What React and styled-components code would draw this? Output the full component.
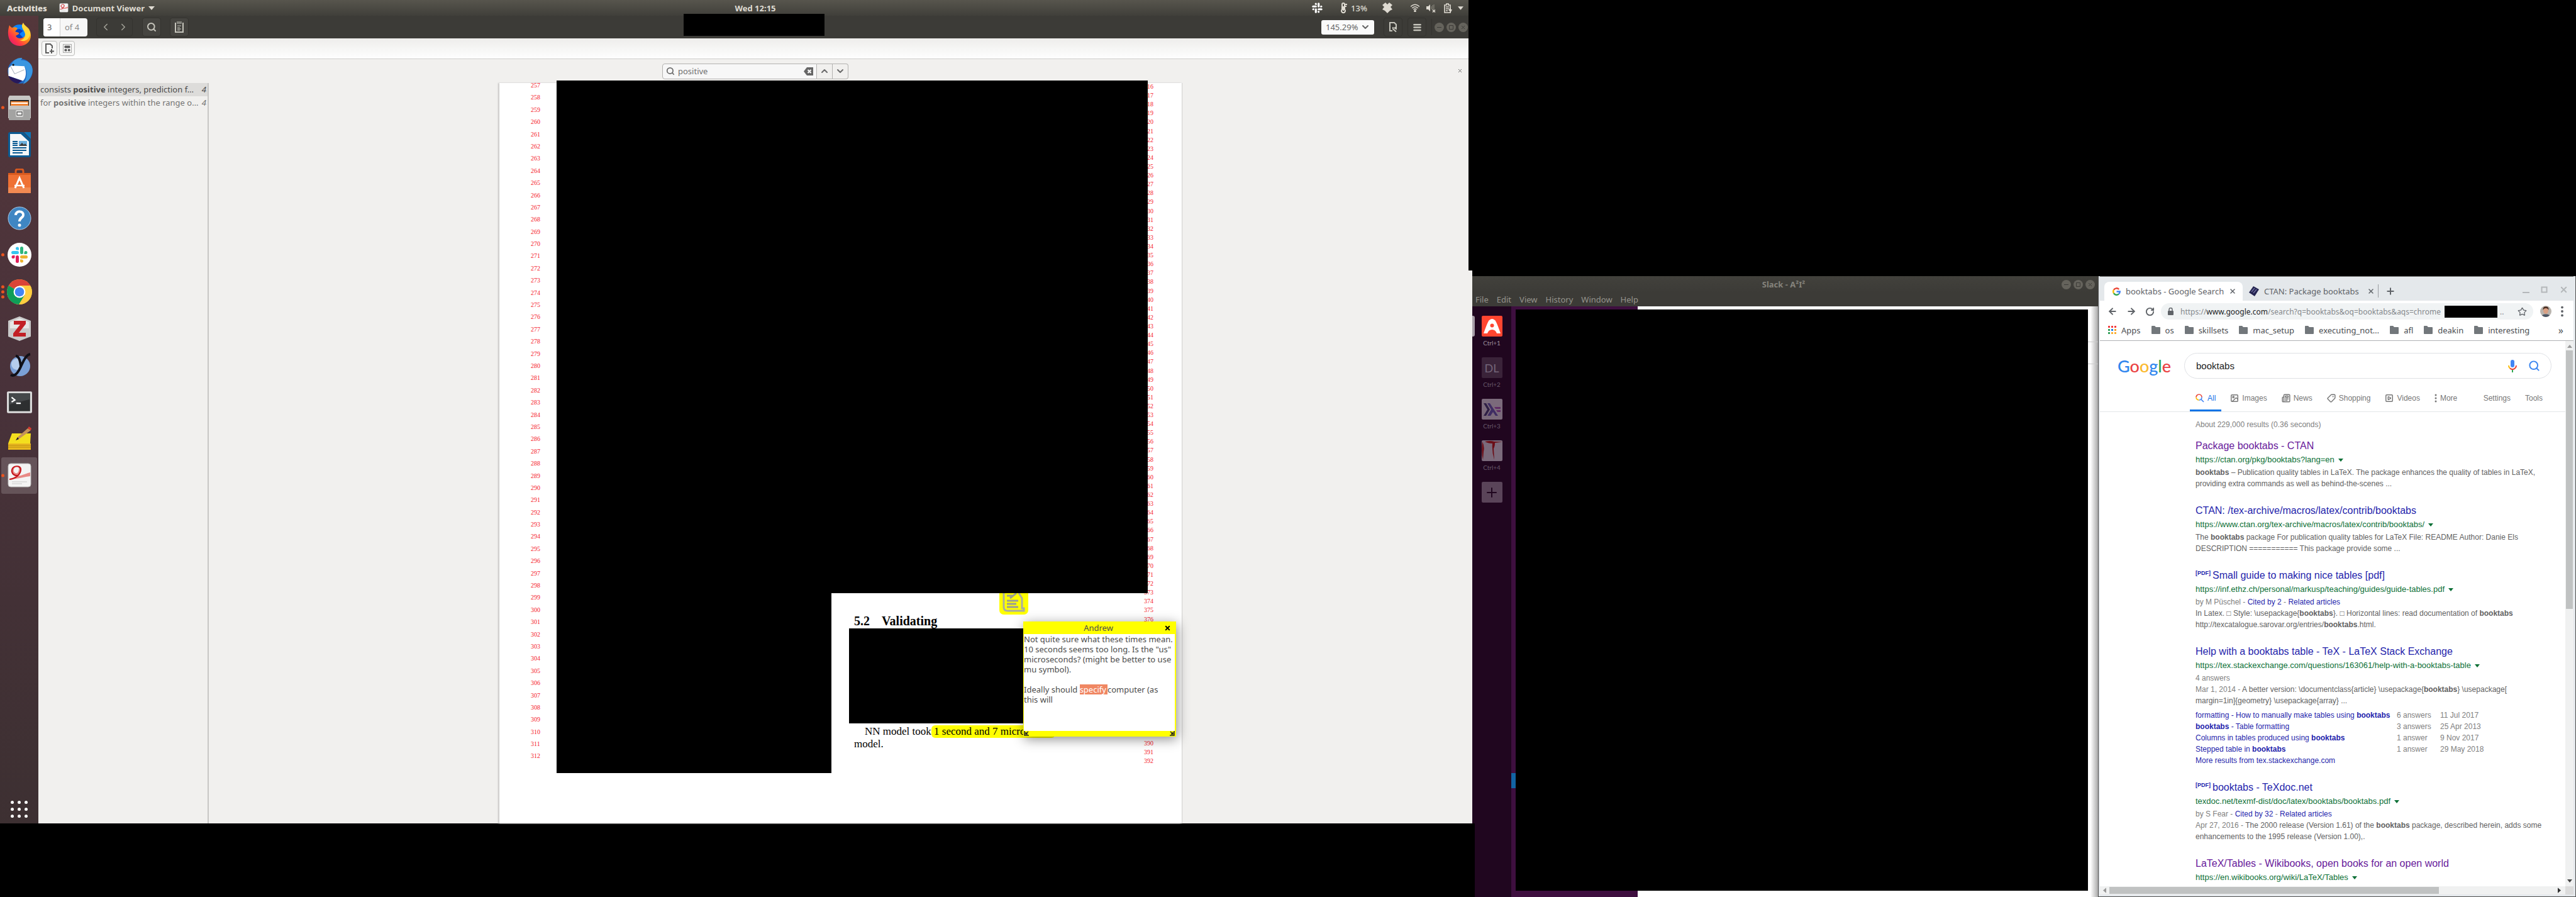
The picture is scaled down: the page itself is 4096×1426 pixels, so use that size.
import React from 'react';
import styled, { createGlobalStyle, css } from 'styled-components';
import {
  Search, ChevronLeft, ChevronRight, ChevronUp, ChevronDown, ArrowLeft, ArrowRight,
  RotateCw, Plus, Star, Tag, X, Newspaper, Image as ImageIcon, SquarePlay, Menu,
} from 'lucide-react';

const ui = '"Noto Sans", "Open Sans", sans-serif';
const arial = '"Liberation Sans", Arial, sans-serif';
const serif = '"Liberation Serif", "Times New Roman", serif';

const Global = createGlobalStyle`
  * { box-sizing: border-box; }
  body { margin: 0; background: #000; font-family: ${ui}; font-size: 13px; }
  button, input, select { font: inherit; color: inherit; margin: 0; padding: 0; border: 0; background: none; }
  a { color: inherit; text-decoration: none; }
  ul, h1, h2, h3, p { margin: 0; padding: 0; list-style: none; font-weight: 400; }
  svg { display: block; flex: none; }
`;

/* ---------- desktop ---------- */
const Desktop = styled.div`
  position: relative;
  display: grid;
  grid-template-columns: minmax(0, 2341fr) minmax(0, 995fr) minmax(0, 760fr);
  grid-template-rows: minmax(0, 439fr) minmax(0, 870fr) minmax(0, 117fr);
  height: 100vh;
  background: #000;
  overflow: hidden;
`;
const Monitor = styled.div`
  grid-column: 1;
  grid-row: 1 / 3;
  position: relative;
  display: flex;
  flex-direction: column;
  min-height: 0;
`;
const ScreenEdge = styled.div`
  position: absolute;
  top: 0;
  right: 0;
  width: 6px;
  height: 430px;
  background: #000;
`;

/* ---------- shell bar ---------- */
const ShellBar = styled.header`
  display: grid;
  grid-template-columns: 1201fr auto 1140fr;
  align-items: center;
  height: 25px;
  flex: none;
  background: linear-gradient(#57554d, #403f3a);
  color: #dfdbd2;
  font-weight: 700;
  line-height: 24px;
`;
const ShellLeft = styled.div`
  display: flex;
  align-items: center;
  padding-left: 11px;
`;
const AppMenu = styled.button`
  display: flex;
  align-items: center;
  gap: 6px;
  margin-left: 19px;
  font-weight: 700;
`;
const Clock = styled.time`
  margin: 0 -32px;
`;
const ShellRight = styled.div`
  display: flex;
  align-items: center;
  justify-content: flex-end;
  padding-right: 14px;
`;
const Tray = styled.span`
  display: flex;
  align-items: center;
  gap: 6px;
  margin-right: ${p => p.$after}px;
  font-weight: 500;
`;

/* ---------- dock ---------- */
const Workspace = styled.div`
  display: flex;
  flex: 1;
  min-height: 0;
`;
const Dock = styled.nav`
  display: flex;
  flex-direction: column;
  justify-content: space-between;
  align-items: center;
  width: 61px;
  flex: none;
  padding-bottom: 9px;
  background: linear-gradient(#54373b, #49323a 45%, #3d3032);
`;
const DockList = styled.ul`
  display: flex;
  flex-direction: column;
  width: 100%;
  height: 760px;
`;
const DockItem = styled.li`
  position: relative;
  display: flex;
  align-items: center;
  justify-content: center;
  flex: 1;
  margin: 0 2px;
  border-radius: 3px;
  background: ${p => (p.$active ? 'rgba(255,255,255,.17)' : 'none')};
`;
const Dots = styled.span`
  position: absolute;
  left: 0;
  top: 50%;
  transform: translateY(-50%);
  display: grid;
  gap: 3px;
  i { width: 5px; height: 5px; border-radius: 50%; background: #e95420; }
`;
const GridButton = styled.button`
  display: grid;
  grid-template-columns: repeat(3, 5px);
  gap: 6px;
  i { width: 5px; height: 5px; border-radius: 50%; background: #fff; }
`;

/* ---------- document viewer ---------- */
const Viewer = styled.main`
  display: flex;
  flex-direction: column;
  flex: 1;
  min-width: 0;
  background: #f1f0ee;
  color: #4c4c4c;
`;
const ViewerHeader = styled.div`
  position: relative;
  display: flex;
  align-items: center;
  height: 36px;
  flex: none;
  padding: 0 7px 0 8px;
  background: #3c3b37;
`;
const PageEntry = styled.label`
  display: flex;
  width: 70px;
  height: 29px;
  margin-right: 14px;
  border-radius: 4px;
  background: #f7f7f7;
  line-height: 29px;
  color: #8b8b8b;
  overflow: hidden;
  input { width: 27px; padding-left: 6px; border-right: 1px solid #d0d0d0; color: #5c5c5c; background: #fff; }
  span { padding-left: 7px; }
`;
const HeaderButton = styled.button`
  display: flex;
  align-items: center;
  justify-content: space-around;
  width: 30px;
  height: 30px;
  margin-right: ${p => p.$after ?? 14}px;
  border: 1px solid #34332f;
  border-radius: 4px;
  background: ${p => (p.$raised ? '#454440' : '#3d3c38')};
  color: #c5c4bb;
`;
const Pair = styled.div`
  display: flex;
  width: 58px;
  height: 30px;
  margin-right: 15px;
  border: 1px solid #34332f;
  border-radius: 4px;
  color: #a3a299;
  button { flex: 1; display: flex; align-items: center; justify-content: center; }
`;
const TitleRedaction = styled.div`
  position: absolute;
  left: 1026px;
  top: -3px;
  width: 224px;
  height: 35px;
  background: #000;
`;
const ZoomBox = styled.label`
  display: flex;
  align-items: center;
  width: 84px;
  height: 23px;
  margin: 0 15px 0 auto;
  padding: 0 6px 0 7px;
  border-radius: 3px;
  background: #fafafa;
  color: #666;
  select { flex: 1; min-width: 0; appearance: none; outline: 0; }
`;
const WindowDots = styled.div`
  display: flex;
  gap: 4px;
  color: #3c3b37;
  button {
    display: flex; align-items: center; justify-content: center;
    width: 15px; height: 15px; border-radius: 50%; background: #65635c;
  }
`;
const Rule = styled.span`
  width: 1px;
  height: 26px;
  margin: 0 4px 0 0;
  background: #33322e;
`;
const AnnotBar = styled.div`
  display: flex;
  align-items: center;
  gap: 3px;
  height: 33px;
  flex: none;
  padding: 0 5px 1px;
  background: linear-gradient(#eeedeb, #fefefe);
  border-bottom: 1px solid #cfcecc;
`;
const LightButton = styled.button`
  display: flex;
  align-items: center;
  justify-content: center;
  width: 25px;
  height: 24px;
  border: 1px solid #bdbdbb;
  border-radius: 4px;
  background: #f7f7f6;
  color: #5c5c5c;
`;
const FindBar = styled.form`
  display: flex;
  align-items: center;
  justify-content: center;
  position: relative;
  height: 38px;
  flex: none;
  color: #6b6b6b;
`;
const FindEntry = styled.label`
  display: flex;
  align-items: center;
  width: 246px;
  height: 25px;
  padding: 0 5px;
  gap: 5px;
  border: 1px solid #b3b2b0;
  border-radius: 4px 0 0 4px;
  background: #f7f7f7;
  input { flex: 1; min-width: 0; color: #6f6f6f; outline: 0; }
`;
const FindStep = styled.button`
  display: flex;
  align-items: center;
  justify-content: center;
  width: 25px;
  height: 25px;
  border: 1px solid #b3b2b0;
  border-left: 0;
  border-radius: ${p => (p.$last ? '0 4px 4px 0' : '0')};
`;
const FindClose = styled.button`
  position: absolute;
  right: 15px;
  top: 14px;
`;
const ViewerBody = styled.div`
  display: flex;
  flex: 1;
  min-height: 0;
`;
const Results = styled.aside`
  width: 271px;
  flex: none;
  border-right: 2px solid #c8c7c5;
`;
const ResultLine = styled.button`
  display: flex;
  justify-content: space-between;
  width: 100%;
  height: 21px;
  padding: 0 2px 0 3px;
  line-height: 21px;
  text-align: left;
  white-space: nowrap;
  color: ${p => (p.$on ? '#4c4c4c' : '#747473')};
  background: ${p => (p.$on ? '#dddcda' : 'none')};
`;
const DocArea = styled.div`
  flex: 1;
  min-width: 0;
  display: flex;
  justify-content: center;
`;
const Page = styled.article`
  position: relative;
  display: flex;
  width: 1085px;
  flex: none;
  background: #fff;
  box-shadow: -2px 0 2px #c9c8c6, 1px 0 1px #d5d4d2;
  font-family: ${serif};
  color: #000;
`;
const Numbers = styled.div`
  display: flex;
  flex-direction: column;
  justify-content: space-between;
  flex: none;
  width: ${p => p.$w}px;
  height: ${p => p.$h}px;
  margin-left: ${p => p.$ml}px;
  margin-top: ${p => p.$mt}px;
  font-size: 10px;
  line-height: 8px;
  color: #f5222c;
  span { height: 8px; }
`;
const Column = styled.div`
  position: relative;
  z-index: 1;
  width: 940px;
  flex: none;
`;
const Blackout = styled.div`
  width: ${p => (p.$w ? p.$w + 'px' : '100%')};
  height: ${p => p.$h}px;
  margin-top: ${p => p.$mt || 0}px;
  flex: none;
  background: #000;
`;
const Lower = styled.div`
  display: flex;
`;
const Section = styled.section`
  padding: 33px 0 0 28px;
`;
const SectionTitle = styled.h2`
  display: flex;
  gap: 19px;
  padding-left: 8px;
  font-size: 20px;
  font-weight: 700;
  line-height: 23px;
`;
const Para = styled.p`
  margin-top: 3px;
  padding-left: 8px;
  font-size: 17px;
  line-height: 20px;
  text-indent: 17px;
  white-space: nowrap;
  mark { display: inline-block; width: 197px; padding-left: 4px; margin-left: -4px; border-radius: 6px; background: #ff0; text-indent: 0; }
`;
const NoteMark = styled.button`
  position: absolute;
  left: 704px;
  top: 811px;
  width: 46px;
  height: 34px;
  display: flex;
  justify-content: center;
  border-radius: 0 0 7px 7px;
  background: #ff0;
  overflow: hidden;
`;
const Popup = styled.div`
  position: absolute;
  z-index: 2;
  left: 833px;
  top: 856px;
  width: 243px;
  height: 183px;
  display: flex;
  flex-direction: column;
  padding: 0 2px 0 1px;
  background: #ff0;
  box-shadow: 2px 4px 18px rgba(0,0,0,.45);
  font-family: ${ui};
  color: #4c4c4c;
`;
const PopupHead = styled.div`
  display: flex;
  align-items: center;
  height: 20px;
  flex: none;
  padding: 0 6px 0 14px;
  span { flex: 1; text-align: center; line-height: 20px; }
  button { color: #000; }
`;
const PopupText = styled.div`
  flex: 1;
  background: #fff;
  line-height: 16px;
  white-space: pre;
  mark { display: inline-block; padding-right: 2px; color: #fff; background: #f08763; }
`;
const PopupFoot = styled.div`
  display: flex;
  justify-content: space-between;
  height: 9px;
  flex: none;
`;

/* ---------- slack ---------- */
const Slack = styled.section`
  grid-column: 2;
  grid-row: 2 / 4;
  display: flex;
  flex-direction: column;
  min-height: 0;
  background: #3c3b37;
  color: #96948d;
`;
const SlackTitle = styled.div`
  display: grid;
  grid-template-columns: 80px 1fr 80px;
  align-items: center;
  height: 26px;
  flex: none;
  padding-right: 5px;
  background: linear-gradient(#42413c, #3c3b37);
  h2 { text-align: center; font-size: 13px; font-weight: 700; color: #85837c; }
  > div { justify-self: end; }
`;
const MenuBar = styled.nav`
  display: flex;
  gap: 13px;
  height: 22px;
  flex: none;
  padding-left: 5px;
  line-height: 22px;
`;
const SlackBody = styled.div`
  display: flex;
  flex: 1;
  min-height: 0;
`;
const Teams = styled.ul`
  position: relative;
  width: 62px;
  flex: none;
  padding-top: 15px;
  background: #20061f;
`;
const Team = styled.li`
  position: relative;
  display: flex;
  flex-direction: column;
  align-items: center;
  gap: 4px;
  height: 66px;
  font: 10px/12px Lato, ${ui};
  color: ${p => (p.$on ? '#9a8c9a' : '#67586a')};
  ${p => p.$on && css`
    &::before { content: ''; position: absolute; left: 0; top: 0; width: 4px; height: 33px; border-radius: 0 3px 3px 0; background: #a79ea7; }
  `}
`;
const TeamTile = styled.button`
  display: flex;
  align-items: center;
  justify-content: center;
  width: 33px;
  height: 33px;
  border-radius: 2px;
  background: ${p => p.$bg};
  font-size: 18px;
  color: #74657a;
  overflow: hidden;
`;
const SlackPane = styled.div`
  flex: 1;
  display: flex;
  padding: 5px 16px 10px 7px;
  position: relative;
  background: linear-gradient(90deg, #3e0f3f 201px, #fff 201px, #fff calc(100% - 12px), #aaa);
`;
const ChannelMark = styled.span`
  position: absolute;
  left: 0;
  top: 742px;
  width: 7px;
  height: 24px;
  background: #1264a3;
`;
const PaneLine = styled.span`
  position: absolute;
  right: 0;
  top: ${p => p.$top}px;
  width: 16px;
  height: 1px;
  background: #ccc;
`;
const CornerBlack = styled.li`
  position: absolute;
  left: 0;
  bottom: 0;
  width: 4px;
  height: 117px;
  background: #000;
`;
const Fill = styled.div`
  flex: 1;
  background: #000;
`;

/* ---------- chrome ---------- */
const Chrome = styled.section`
  grid-column: 3;
  grid-row: 2 / 4;
  display: flex;
  flex-direction: column;
  min-height: 0;
  padding: 0 3px 3px 2px;
  border: 1px solid #4f4f4f;
  border-top: 0;
  background: #e4e8eb;
  color: #5f6368;
`;
const TabStrip = styled.div`
  display: flex;
  height: 39px;
  flex: none;
  padding: 8px 7px 0;
  border-top: 1px solid #777;
`;
const Tab = styled.div`
  display: flex;
  align-items: center;
  gap: 8px;
  width: ${p => (p.$on ? 220 : 215)}px;
  padding: 0 ${p => (p.$on ? 10 : 5)}px 0 ${p => (p.$on ? 13 : 10)}px;
  border-radius: 8px 8px 0 0;
  background: ${p => (p.$on ? '#fff' : 'none')};
  white-space: nowrap;
  span { flex: 1; }
`;
const NewTab = styled.button`
  display: flex;
  align-items: center;
  height: 21px;
  margin-top: 4px;
  padding-left: 11px;
  border-left: 1px solid #9a9da1;
`;
const WinButtons = styled.div`
  display: flex;
  gap: 18px;
  margin: 0 1px 0 auto;
  height: 24px;
  align-items: center;
  color: #b4b7ba;
`;
const Toolbar = styled.div`
  display: flex;
  align-items: center;
  height: 34px;
  flex: none;
  padding: 0 15px 0 12px;
  background: #fff;
`;
const NavButton = styled.button`
  margin-right: 14px;
`;
const Omnibox = styled.div`
  display: flex;
  align-items: center;
  flex: 1;
  height: 26px;
  margin: 0 11px 0 -4px;
  padding: 0 10px 0 11px;
  border-radius: 13px;
  background: #f0f3f4;
  font-size: 12px;
  color: #85888c;
  svg:first-child { margin-right: 11px; }
  b { font-weight: 400; color: #202124; }
`;
const Address = styled.div`
  flex: 1;
  display: flex;
  align-items: center;
  white-space: nowrap;
  i { width: 84px; height: 19px; margin: 0 4px 0 6px; background: #000; }
`;
const Bookmarks = styled.nav`
  display: flex;
  align-items: center;
  gap: 17px;
  height: 30px;
  flex: none;
  padding: 0 16px 4px 13px;
  background: #fff;
  border-bottom: 1px solid #b0b2b4;
  color: #4b4e52;
  > button { margin-left: auto; font-size: 16px; }
`;
const Bookmark = styled.a`
  display: flex;
  align-items: center;
  gap: 8px;
  white-space: nowrap;
`;
const Viewport = styled.div`
  display: flex;
  flex: 1;
  min-height: 0;
  background: #fff;
`;
const Web = styled.div`
  flex: 1;
  min-width: 0;
  overflow: hidden;
  padding-top: 19px;
  font: 12px/18px ${arial};
`;
const SearchRow = styled.form`
  display: flex;
  align-items: center;
  padding: 0 22px 0 28px;
`;
const Logo = styled.a`
  width: 106px;
  font: 27px/36px Lato, ${ui};
  font-weight: 500;
  span:nth-child(1), span:nth-child(4) { color: #2f86ee; }
  span:nth-child(2), span:nth-child(6) { color: #ea4142; }
  span:nth-child(3) { color: #fbb92d; }
  span:nth-child(5) { color: #34a853; }
`;
const SearchBox = styled.label`
  display: flex;
  align-items: center;
  gap: 18px;
  flex: 1;
  height: 41px;
  padding: 0 17px 0 18px;
  border: 1px solid #dfe1e5;
  border-radius: 21px;
  font-size: 15px;
  color: #222;
  input { flex: 1; outline: 0; }
`;
const SearchNav = styled.nav`
  display: flex;
  gap: 5px;
  padding: 21px 27px 0 143px;
  border-bottom: 1px solid #e4e6e8;
`;
const SearchTab = styled.a`
  display: flex;
  align-items: center;
  gap: 5px;
  height: 31px;
  padding: 0 9px 8px;
  color: ${p => (p.$on ? '#1a73e8' : '#777')};
  border-bottom: 3px solid ${p => (p.$on ? '#0b74e6' : 'transparent')};
  margin-left: ${p => (p.$push ? 'auto' : 0)};
`;
const Hits = styled.div`
  padding: 11px 0 0 152px;
  color: #626262;
  white-space: nowrap;
`;
const Stats = styled.p`
  color: #808080;
  margin-bottom: 13px;
`;
const Hit = styled.article`
  margin-bottom: 22px;
`;
const HitTitle = styled.h3`
  font-size: 16px;
  line-height: 24px;
  color: ${p => (p.$seen ? '#681a9b' : '#1f1fac')};
  sup { margin-right: 3px; font-size: 9px; font-weight: 700; line-height: 0; }
`;
const HitUrl = styled.cite`
  display: flex;
  align-items: center;
  gap: 6px;
  margin-bottom: 1px;
  font-style: normal;
  font-size: 13px;
  line-height: 20px;
  color: #0c7036;
`;
const Snip = styled.p`
  a { color: #1f1fac; }
  em { font-style: normal; color: #808080; }
`;
const Answers = styled.table`
  margin-top: 5px;
  border-collapse: collapse;
  td { padding: 0; color: #808080; line-height: 18px; }
  td:nth-child(1) { width: 320px; color: #1f1fac; }
  td:nth-child(2) { width: 69px; }
`;
const VScroll = styled.div`
  display: flex;
  flex-direction: column;
  align-items: center;
  justify-content: space-between;
  width: 13px;
  flex: none;
  padding: 6px 1px;
  background: #f0f1f1;
`;
const VThumb = styled.div`
  width: 100%;
  height: 411px;
  margin: 4px 0 auto;
  background: #c0c2c2;
`;
const HScroll = styled.div`
  display: flex;
  align-items: center;
  justify-content: space-between;
  height: 13px;
  flex: none;
  padding-left: 5px;
  background: linear-gradient(90deg, #f0f1f1 calc(100% - 13px), #dcdcdc calc(100% - 13px));
  padding-right: 20px;
`;
const HThumb = styled.div`
  width: 524px;
  height: 11px;
  margin: 0 auto 0 5px;
  background: #c0c2c2;
`;

/* ---------- icons ---------- */
const Caret = ({ c = 'currentColor', w = 10, h = 6, d = 'M0 0H10L5 6Z' }) => (
  <svg width={w} height={h} viewBox={w > h ? '0 0 10 6' : '0 0 6 10'}><path d={d} fill={c} /></svg>
);
const Art = ({ size = 40, children, box = 40 }) => (
  <svg width={size} height={size} viewBox={`0 0 ${box} ${box}`}>{children}</svg>
);
const Evince = ({ size }) => (
  <Art size={size}>
    <rect x="2" y="1" width="36" height="37" rx="4" fill="#f4f4f4" stroke="#bbb" />
    <path d="M4 26C14 25 22 18 22 10C22 4 10 3 8 11C7 17 14 22 22 20C28 18 32 16 37 15V21C28 22 20 25 4 26ZM19 9C19 16 15 18 12 15C9 11 12 6 16 6C18 6 19 7 19 9Z" fill="#e88a86" fillRule="evenodd" />
    <path d="M4 26C14 25 22 18 22 10C22 4 10 3 8 11C7 17 12 21 18 20" fill="none" stroke="#c4161c" strokeWidth="2.2" />
    <path d="M8 30H32M8 33H24" stroke="#c9c9c9" />
  </Art>
);
const Firefox = () => (
  <Art>
    <defs>
      <linearGradient id="ff" x1="1" y1="0" x2="0" y2="1"><stop offset="0" stopColor="#fff44f" /><stop offset=".4" stopColor="#ff980e" /><stop offset=".7" stopColor="#ff3647" /><stop offset="1" stopColor="#d3107f" /></linearGradient>
    </defs>
    <circle cx="20" cy="20" r="15" fill="#0a84ff" />
    <path d="M20 12a8 8 0 0 0-7 12c3 5 9 5 13 2l-6-6 6-5z" fill="#0a3fbf" />
    <path d="M4 6C5 8 7 10 9 10C12 9 14 9 17 11L13 16C16 18 20 17 19 20L14 23C16 28 24 28 28 24C32 18 25 12 26 3C29 7 33 9 35 12C43 26 34 39 20 39C5 39 -2 24 4 6Z" fill="url(#ff)" />
    <path d="M26 2C20 10 29 14 29 21C29 26 25 30 20 30C30 34 37 27 37 18C36 12 28 9 26 2Z" fill="#ffd93b" />
  </Art>
);
const Thunderbird = () => (
  <Art size={44}>
    <circle cx="21" cy="20" r="18" fill="#1f66c0" />
    <path d="M8 13C9 4 18 0 24 1L22 4C36 4 41 14 38 24C35 34 29 37 25 39C32 30 31 20 28 14Z" fill="#3a96e0" />
    <path d="M4 16L8 12L27 13C31 22 29 31 25 34L4 27Z" fill="#fff" />
    <path d="M7 13L13 24L27 18" fill="none" stroke="#a9b4bf" />
    <path d="M4 27L24 34L18 38C11 37 6 33 4 27Z" fill="#26195c" />
    <circle cx="11" cy="11" r="1.5" fill="#111" />
  </Art>
);
const Files = () => (
  <Art>
    <path d="M4 1H36L38 5V37H2V5Z" fill="#c7c6c4" />
    <rect x="5" y="8" width="30" height="9" fill="#222" />
    <path d="M6 10H34V17H6Z" fill="#f08434" /><path d="M7 12H33V14H7Z" fill="#fff" />
    <rect x="3" y="17" width="34" height="23" rx="1" fill="#a3a3a2" /><path d="M3 17H37V23H3Z" fill="#c4c4c3" />
    <rect x="14" y="24" width="12" height="11" rx="2" fill="#d8d8d7" /><rect x="16" y="27" width="8" height="5" fill="#f3f3f3" stroke="#333" />
  </Art>
);
const Writer = () => (
  <Art>
    <path d="M5 0H26L38 12V37Q38 40 35 40H5Q2 40 2 37V3Q2 0 5 0Z" fill="#0a5a92" />
    <path d="M27 0H38V11Z" fill="#0d76b8" />
    <path d="M5 3H22L35 15V37H5Z" fill="#f5f7f8" />
    <path d="M9 15H17M9 18H17M9 21H17M9 25H31M9 29H31M9 33H25" stroke="#0a5a92" strokeWidth="2" />
    <rect x="19" y="14" width="13" height="8" fill="#6bb0de" /><path d="M19 22L24 17L27 20L29 18L32 22Z" fill="#3c3c3c" />
  </Art>
);
const Software = () => (
  <Art>
    <path d="M14 10V4Q14 1 17 1H23Q26 1 26 4V10" fill="none" stroke="#d85a20" strokeWidth="3" />
    <path d="M2 7H38V39H2Z" fill="#ef7134" /><path d="M2 7H38V10H2Z" fill="#d95a1e" /><path d="M2 30H38V39H2Z" fill="#f28a52" />
    <path d="M13 31L20 15L27 31" fill="none" stroke="#fff" strokeWidth="3" /><path d="M12 27H28" stroke="#fff" strokeWidth="2.5" />
  </Art>
);
const Help = () => (
  <Art>
    <circle cx="20" cy="20" r="18" fill="#3f86c3" stroke="#a9c9e6" />
    <path d="M14 15C14 7 27 8 26 15C26 19 20 19 20 25" fill="none" stroke="#fff" strokeWidth="4" /><circle cx="20" cy="31" r="2.5" fill="#fff" />
  </Art>
);
const slackArms = [['#36c5f0', 0], ['#2eb67d', 90], ['#ecb22e', 180], ['#e01e5a', 270]];
const SlackMark = ({ mono }) => slackArms.map(([c, r]) => (
  <g key={r} transform={`rotate(${r} 20 20)`} fill={mono || c}>
    <rect x="7" y="14" width="12" height="5" rx="2.5" />
    <path d="M19 12.500h-2.500a2.500 2.500 0 1 1 2.500-2.500z" />
  </g>
));
const SlackIcon = () => (<Art><circle cx="20" cy="20" r="19" fill="#fff" /><SlackMark /></Art>);
const ChromeIcon = () => (
  <Art size={42}>
    <circle cx="20" cy="20" r="19" fill="#ffcd40" />
    <path d="M20 20L3.500 10.500A19 19 0 0 1 36.500 10.500H20Z" fill="#db4437" />
    <path d="M20 20L3.500 10.500A19 19 0 0 0 19 39L28 24.600Z" fill="#0f9d58" />
    <path d="M20 11H36.500A19 19 0 0 1 20 39L28.500 24Z" fill="#ffcd40" />
    <circle cx="20" cy="20" r="9" fill="#fff" /><circle cx="20" cy="20" r="7" fill="#4285f4" />
  </Art>
);
const Zotero = () => (
  <Art>
    <path d="M20 1L38 8V33L20 40L2 33V8Z" fill="#c9c9c9" /><path d="M20 4L35 10V20H5V10Z" fill="#e6e6e6" />
    <path d="M11 8H30V13L19 27H30V33H10V28L21 14H11Z" fill="#c22026" />
  </Art>
);
const Yed = () => (
  <Art>
    <circle cx="21" cy="22" r="16" fill="#7ba0d6" /><circle cx="16" cy="19" r="9" fill="#b5cdec" />
    <path d="M14 6C19 6 21 12 22 22M37 3C31 4 27 12 22 23C17 34 12 39 6 36" fill="none" stroke="#101018" strokeWidth="4" />
  </Art>
);
const Terminal = () => (
  <Art size={42}>
    <rect x="1" y="4" width="38" height="33" rx="2" fill="#dcdcdc" /><rect x="4" y="7" width="32" height="27" fill="#2d2f30" />
    <path d="M4 7H36V16L4 24Z" fill="#45484a" /><path d="M8 13L13 17L8 20M15 22H22" fill="none" stroke="#fff" strokeWidth="2" />
  </Art>
);
const Notes = () => (
  <Art>
    <path d="M2 28L8 12H38L37 28Z" fill="#f3df1e" /><path d="M2 28H38V38H2Z" fill="#e9b820" /><path d="M2 31H38M2 34H38" stroke="#b98d10" />
    <path d="M14 23L17 18L33 4L38 7L19 21Z" fill="#c4925a" /><path d="M33 4L35 1L39 4L38 7Z" fill="#d83a2f" /><path d="M14 23L17 18L19 21Z" fill="#222" />
  </Art>
);
const GIcon = ({ size = 13 }) => (
  <svg width={size} height={size} viewBox="0 0 24 24" fill="none" strokeWidth="4.500">
    <path d="M19 5.500A9.700 9.700 0 0 0 3.600 7.200" stroke="#ea4335" /><path d="M3.600 7.200A9.700 9.700 0 0 0 3.600 16.800" stroke="#fbbc05" />
    <path d="M3.600 16.800A9.700 9.700 0 0 0 18.500 19.200" stroke="#34a853" /><path d="M18.500 19.200A9.700 9.700 0 0 0 21.700 12H12" stroke="#4285f4" />
  </svg>
);
const Folder = () => (<svg width="14" height="13" viewBox="0 0 14 13"><path d="M0 1Q0 0 1 0H5L7 2H13Q14 2 14 3V12Q14 13 13 13H1Q0 13 0 12Z" fill="#72777b" /></svg>);
const NotesGlyph = () => (
  <svg width="14" height="18" viewBox="0 0 14 18" fill="none" stroke="currentColor">
    <path d="M2 3H1V17H13V3H12" strokeWidth="2" /><path d="M4 0V4M6 0V4M8 0V4M10 0V4M4 7H10M4 10H8M4 12H10M4 14H8" />
  </svg>
);
const PageAdd = () => (<svg width="14" height="16" viewBox="0 0 14 16" fill="none" stroke="currentColor" strokeWidth="2"><path d="M6 15H1V1H8L11 4V8M10 9V16M7 12.500H14" /></svg>);
const SelectArea = () => (<svg width="14" height="14" viewBox="0 0 14 14" stroke="currentColor"><path d="M.5.5H13.500V13.500H.5Z" fill="none" strokeDasharray="1 1" /><path d="M3 3H11V6H3ZM3 8.500H6V11H3ZM8.500 8.500H11V11H8.500Z" fill="currentColor" /></svg>);
const PageWrench = () => (<svg width="13" height="16" viewBox="0 0 13 16" fill="none" stroke="currentColor" strokeWidth="2"><path d="M5 14H1V1H8L11 4V12M6 8V11L11 15.500M9 8V11" /></svg>);
const Thermo = () => (<svg width="10" height="18" viewBox="0 0 10 18" fill="none" stroke="currentColor" strokeWidth="2"><path d="M2 11V3A2 2 0 0 1 6 3V11A3 3 0 1 1 2 11ZM4 6V13M7 3H10M7 6H9" /></svg>);
const DropboxGlyph = () => (<svg width="16" height="17" viewBox="0 0 16 17" fill="currentColor"><path d="M5 0L8 3L11 0L16 4L13 7L16 11L12 13L8 17L4 13L0 11L3 7L0 4Z" /></svg>);
const Wifi = () => (<svg width="14" height="13" viewBox="0 0 14 13" fill="none" stroke="currentColor" strokeWidth="1.600"><path d="M0 4.500Q7-2 14 4.500M2.300 7Q7 2.500 11.700 7M4.500 9.200Q7 7 9.500 9.200" /><circle cx="7" cy="11.500" r="1" fill="currentColor" /></svg>);
const Volume = () => (<svg width="15" height="14" viewBox="0 0 15 14"><path d="M0 4H3L6 1V12L3 9H0Z" fill="currentColor" /><path d="M8 4V9M10 2V10M12 1V9" stroke="#8b897f" /><path d="M10 9.500L14 13.500M14 9.500L10 13.500" stroke="currentColor" strokeWidth="1.500" /></svg>);
const Battery = () => (<svg width="13" height="16" viewBox="0 0 13 16"><path d="M1 3H4V1H7V3H10V15H1Z" fill="none" stroke="currentColor" strokeWidth="1.600" /><path d="M3 6H8M3 9H8M3 12H6" stroke="currentColor" strokeWidth="1.600" /><path d="M10 7L7 12H10V16L13 10H11Z" fill="currentColor" /></svg>);
const BackSpace = () => (<svg width="15" height="13" viewBox="0 0 15 13"><path d="M0 6.500L5 0H15V13H5Z" fill="#666" /><path d="M6.500 4L11.500 9M11.500 4L6.500 9" stroke="#fff" strokeWidth="2" /></svg>);
const Min = () => (<svg width="9" height="9" viewBox="0 0 9 9"><path d="M1 4.500H8" stroke="currentColor" /></svg>);
const Max = () => (<svg width="9" height="9" viewBox="0 0 9 9"><path d="M1.500 1.500H7.500V7.500H1.500Z" fill="none" stroke="currentColor" /></svg>);
const Cls = () => (<svg width="9" height="9" viewBox="0 0 9 9"><path d="M2 2L7 7M7 2L2 7" stroke="currentColor" /></svg>);
const NoteGlyph = () => (
  <svg width="36" height="34" viewBox="0 0 36 34" fill="none" stroke="#a9aca4" strokeWidth="3">
    <path d="M2 0V22Q2 28 8 28H34V24H31V8L26 0" /><path d="M7 4H16M7 12H25M7 17H22M7 22H25M12 8L22 0" stroke="#9a9d96" />
  </svg>
);
const Corner = ({ flip }) => (<svg width="8" height="8" viewBox="0 0 8 8" transform={flip ? 'scale(-1 1)' : undefined}><path d="M1 0V7H8M3 5L7 1M3 2V5H6" fill="none" stroke="#222" strokeWidth="1.500" /></svg>);
const Mic = () => (<svg width="14" height="20" viewBox="0 0 14 20" fill="none" strokeWidth="2"><rect x="4" y="0" width="6" height="12" rx="3" fill="#4285f4" /><path d="M1 9Q1 12 3 13.500" stroke="#fbbc05" /><path d="M3 13.500Q7 17 11 13.500Q13 12 13 9" stroke="#ea4335" /><path d="M7 16V20" stroke="#34a853" /></svg>);
const MultiSearch = () => (<svg width="14" height="14" viewBox="0 0 14 14" fill="none" strokeWidth="1.700"><path d="M1 5.500A4.500 4.500 0 0 1 5.500 1" stroke="#ea4335" /><path d="M5.500 1A4.500 4.500 0 0 1 10 5.500" stroke="#ea4335" /><path d="M10 5.500A4.500 4.500 0 0 1 5.500 10M9 9L13 13" stroke="#4285f4" /><path d="M5.500 10A4.500 4.500 0 0 1 1 5.500" stroke="#fbbc05" /></svg>);
const VDots = ({ w = 4, h = 14 }) => (<svg width={w} height={h} viewBox="0 0 4 14" fill="currentColor"><circle cx="2" cy="2" r="1.500" /><circle cx="2" cy="7" r="1.500" /><circle cx="2" cy="12" r="1.500" /></svg>);
const AppsGrid = () => (<svg width="13" height="13" viewBox="0 0 13 13">{['#f23b3f', '#f23b3f', '#f23b3f', '#34a05a', '#1a83ee', '#f5a02c', '#34a05a', '#fbb034', '#fbb034'].map((c, i) => <rect key={i} x={(i % 3) * 5} y={Math.floor(i / 3) * 5} width="3" height="3" fill={c} />)}</svg>);
const Avatar = () => (
  <svg width="18" height="18" viewBox="0 0 18 18"><defs><clipPath id="av"><circle cx="9" cy="9" r="9" /></clipPath></defs>
    <g clipPath="url(#av)"><rect width="18" height="18" fill="#b9b4ae" /><ellipse cx="9" cy="8" rx="4" ry="5" fill="#d9a083" /><path d="M4.500 7Q4 1 9 1.500Q14 1 13.500 7Q12 4 9 4Q6 4 4.500 7Z" fill="#4a2c20" /><path d="M2 18Q3 13 9 13.500Q15 13 16 18Z" fill="#4c5563" /></g></svg>
);
const Ctan = () => (<svg width="16" height="16" viewBox="0 0 16 16"><path d="M7 0L16 5L9 16L0 10Z" fill="#23234f" /><path d="M4 9L9 3M7 11L12 5" stroke="#6e6ea0" strokeWidth="1.500" /></svg>);
const TeamA = () => (<Art size={33} box={33}><path d="M3 28Q10 8 12 7Q16.500 3 21 7Q23 8 30 28L24 28Q22 22 16.500 22Q11 22 9 28Z" fill="#fff" /><circle cx="16.500" cy="15.500" r="3" fill="#ff4733" /></Art>);
const Haskell = () => (<Art size={33} box={33}><path d="M3 7H7L13 17L7 27H3L9 17Z" fill="#2f1f45" /><path d="M9 7H13L26 27H22L18 21L14 27H9L15 17Z" fill="#3f2c63" /><path d="M20 13H30V16H22ZM23 18H30V21H25Z" fill="#602c66" /></Art>);
const ItMark = () => (<Art size={33} box={33}><path d="M1 2Q5 10 3 18L2 31Q-1 20 1 2ZM5 2Q14 0 20 2L33 2.500L21 4Q21 10 19 13L20 31Q16 18 17 5Q10 5 5 2Z" fill="#6b0d16" /></Art>);

const dock = [
  ['Firefox', Firefox, 0], ['Thunderbird', Thunderbird, 0], ['Files', Files, 1], ['Writer', Writer, 0],
  ['Software', Software, 0], ['Help', Help, 0], ['Slack', SlackIcon, 1], ['Chrome', ChromeIcon, 3],
  ['Zotero', Zotero, 0], ['yEd', Yed, 0], ['Terminal', Terminal, 0], ['Notes', Notes, 0], ['Document Viewer', Evince, 1],
];
const range = (a, b) => Array.from({ length: b - a + 1 }, (_, i) => a + i);
/* lines lying behind the open note keep their slot but carry no number */
const behindNote = n => n > 376 && n < 389;
const B = () => <b>booktabs</b>;

function Result({ title, url, pdf, seen, children }) {
  return (
    <Hit>
      <HitTitle $seen={seen}><a href="#result">{pdf && <sup>[PDF]</sup>}{title}</a></HitTitle>
      <HitUrl>{url}<Caret w={8} h={7} /></HitUrl>
      {children}
    </Hit>
  );
}

function WindowControls() {
  return (
    <WindowDots>
      <button aria-label="Minimize"><Min /></button>
      <button aria-label="Maximize"><Max /></button>
      <button aria-label="Close"><Cls /></button>
    </WindowDots>
  );
}

function DocumentViewer() {
  return (
    <Viewer>
      <ViewerHeader>
        <PageEntry><input aria-label="Page" defaultValue="3" /><span>of 4</span></PageEntry>
        <Pair>
          <button aria-label="Back"><ChevronLeft size={18} /></button>
          <button aria-label="Forward"><ChevronRight size={18} /></button>
        </Pair>
        <HeaderButton $raised aria-label="Find"><Search size={16} strokeWidth={3} /></HeaderButton>
        <HeaderButton $raised aria-label="Annotate"><NotesGlyph /></HeaderButton>
        <TitleRedaction />
        <ZoomBox>
          <select aria-label="Zoom" defaultValue="z"><option value="z">145.29%</option></select>
          <ChevronDown size={16} strokeWidth={3} />
        </ZoomBox>
        <HeaderButton $after={8} aria-label="File options"><PageWrench /></HeaderButton>
        <HeaderButton $after={8} aria-label="View options"><Menu size={15} strokeWidth={4} /></HeaderButton>
        <Rule />
        <WindowControls />
      </ViewerHeader>
      <AnnotBar>
        <LightButton aria-label="Add note"><PageAdd /></LightButton>
        <LightButton aria-label="Select area"><SelectArea /></LightButton>
      </AnnotBar>
      <FindBar>
        <FindEntry><Search size={14} strokeWidth={3} /><input aria-label="Find text" defaultValue="positive" /><BackSpace /></FindEntry>
        <FindStep type="button" aria-label="Previous"><ChevronUp size={16} strokeWidth={3} /></FindStep>
        <FindStep type="button" $last aria-label="Next"><ChevronDown size={16} strokeWidth={3} /></FindStep>
        <FindClose type="button" aria-label="Close find"><Cls /></FindClose>
      </FindBar>
      <ViewerBody>
        <Results>
          <ResultLine $on><span>consists <b>positive</b> integers, prediction f…</span><i>4</i></ResultLine>
          <ResultLine><span>for <b>positive</b> integers within the range o…</span><i>4</i></ResultLine>
        </Results>
        <DocArea>
          <Page>
            <Numbers $w={41} $h={1075} $ml={50} $mt={0}>{range(257, 312).map(n => <span key={n}>{n}</span>)}</Numbers>
            <Column>
              <Blackout $h={815} $mt={-4} />
              <Lower>
                <Blackout $w={437} $h={286} />
                <Section>
                  <SectionTitle><span>5.2</span><span>Validating</span></SectionTitle>
                  <Blackout $w={278} $h={151} />
                  <Para>NN model took <mark>1 second and 7 micro</mark><br />model.</Para>
                </Section>
              </Lower>
              <NoteMark aria-label="Note"><NoteGlyph /></NoteMark>
            </Column>
            <Numbers $w={20} $h={1081} $ml={-6} $mt={2}>{range(316, 392).map(n => <span key={n}>{behindNote(n) ? null : n}</span>)}</Numbers>
            <Popup>
              <PopupHead><span>Andrew</span><button aria-label="Close note"><X size={11} strokeWidth={4} /></button></PopupHead>
              <PopupText role="textbox" aria-label="Note text">
                {'Not quite sure what these times mean.\n10 seconds seems too long. Is the "us"\nmicroseconds? (might be better to use\nmu symbol).\n\nIdeally should '}<mark>specify</mark>{'computer (as\nthis will'}
              </PopupText>
              <PopupFoot><Corner /><Corner flip /></PopupFoot>
            </Popup>
          </Page>
        </DocArea>
      </ViewerBody>
    </Viewer>
  );
}

function SlackWindow() {
  return (
    <Slack>
      <SlackTitle><span /><h2>Slack - A²I²</h2><WindowControls /></SlackTitle>
      <MenuBar>{['File', 'Edit', 'View', 'History', 'Window', 'Help'].map(m => <button key={m}>{m}</button>)}</MenuBar>
      <SlackBody>
        <Teams>
          <Team $on><TeamTile $bg="#ff4530" aria-label="Team 1"><TeamA /></TeamTile>Ctrl+1</Team>
          <Team><TeamTile $bg="#3a2339">DL</TeamTile>Ctrl+2</Team>
          <Team><TeamTile $bg="#7b6a7b" aria-label="Team 3"><Haskell /></TeamTile>Ctrl+3</Team>
          <Team><TeamTile $bg="#7b6a7b" aria-label="Team 4"><ItMark /></TeamTile>Ctrl+4</Team>
          <Team><TeamTile $bg="#5a4459" aria-label="Add team"><Plus size={24} color="#20061f" strokeWidth={2} /></TeamTile></Team>
          <CornerBlack />
        </Teams>
        <SlackPane><Fill /><ChannelMark /><PaneLine $top={56} /><PaneLine $top={91} /></SlackPane>
      </SlackBody>
    </Slack>
  );
}

function ChromeWindow() {
  return (
    <Chrome>
      <TabStrip>
        <Tab $on><GIcon /><span>booktabs - Google Search</span><button aria-label="Close tab"><X size={12} strokeWidth={3} /></button></Tab>
        <Tab><Ctan /><span>CTAN: Package booktabs</span><button aria-label="Close tab"><X size={12} strokeWidth={3} /></button></Tab>
        <NewTab aria-label="New tab"><Plus size={16} strokeWidth={3} /></NewTab>
        <WinButtons>
          <button aria-label="Minimize window"><svg width="11" height="13" viewBox="0 0 11 13"><path d="M0 11H11" stroke="currentColor" strokeWidth="2" /></svg></button>
          <button aria-label="Maximize window"><svg width="11" height="11" viewBox="0 0 11 11"><path d="M1.500 1.500H9.500V9.500H1.500Z" fill="none" stroke="currentColor" strokeWidth="2" /></svg></button>
          <button aria-label="Close window"><X size={15} strokeWidth={3} /></button>
        </WinButtons>
      </TabStrip>
      <Toolbar>
        <NavButton aria-label="Back"><ArrowLeft size={16} strokeWidth={3} /></NavButton>
        <NavButton aria-label="Forward"><ArrowRight size={16} strokeWidth={3} /></NavButton>
        <NavButton aria-label="Reload"><RotateCw size={15} strokeWidth={3} /></NavButton>
        <Omnibox>
          <svg width="9" height="12" viewBox="0 0 9 12"><rect y="5" width="9" height="7" rx="1" fill="#5f6368" /><path d="M2 5V3A2.500 2.500 0 0 1 7 3V5" fill="none" stroke="#5f6368" strokeWidth="1.500" /></svg>
          <Address role="textbox" aria-label="Address">https://<b>www.google.com</b>/search?q=booktabs&amp;oq=booktabs&amp;aqs=chrome<i />..</Address>
          <Star size={15} strokeWidth={2} color="#5f6368" />
        </Omnibox>
        <NavButton aria-label="Profile"><Avatar /></NavButton>
        <button aria-label="Chrome menu"><VDots w={6} h={18} /></button>
      </Toolbar>
      <Bookmarks>
        <Bookmark href="#apps"><AppsGrid />Apps</Bookmark>
        {['os', 'skillsets', 'mac_setup', 'executing_not…', 'afl', 'deakin', 'interesting'].map(b => (
          <Bookmark key={b} href="#folder"><Folder />{b}</Bookmark>
        ))}
        <button aria-label="More bookmarks">»</button>
      </Bookmarks>
      <Viewport>
        <Web>
          <SearchRow>
            <Logo href="#home">{[...'Google'].map((l, i) => <span key={i}>{l}</span>)}</Logo>
            <SearchBox>
              <input aria-label="Search" defaultValue="booktabs" />
              <Mic /><Search size={19} color="#3b86f0" strokeWidth={2.5} />
            </SearchBox>
          </SearchRow>
          <SearchNav>
            <SearchTab href="#all" $on><MultiSearch />All</SearchTab>
            <SearchTab href="#images"><ImageIcon size={14} strokeWidth={2.5} />Images</SearchTab>
            <SearchTab href="#news"><Newspaper size={14} strokeWidth={2.5} />News</SearchTab>
            <SearchTab href="#shopping"><Tag size={14} strokeWidth={2.5} transform="scale(-1 1)" />Shopping</SearchTab>
            <SearchTab href="#videos"><SquarePlay size={14} strokeWidth={2.5} />Videos</SearchTab>
            <SearchTab href="#more"><VDots />More</SearchTab>
            <SearchTab href="#settings" $push>Settings</SearchTab>
            <SearchTab href="#tools">Tools</SearchTab>
          </SearchNav>
          <Hits>
            <Stats>About 229,000 results (0.36 seconds)</Stats>
            <Result seen title="Package booktabs - CTAN" url="https://ctan.org/pkg/booktabs?lang=en">
              <Snip><B /> – Publication quality tables in LaTeX. The package enhances the quality of tables in LaTeX,<br />providing extra commands as well as behind-the-scenes ...</Snip>
            </Result>
            <Result title="CTAN: /tex-archive/macros/latex/contrib/booktabs" url="https://www.ctan.org/tex-archive/macros/latex/contrib/booktabs/">
              <Snip>The <B /> package For publication quality tables for LaTeX File: README Author: Danie Els<br />DESCRIPTION =========== This package provide some ...</Snip>
            </Result>
            <Result pdf title="Small guide to making nice tables [pdf]" url="https://inf.ethz.ch/personal/markusp/teaching/guides/guide-tables.pdf">
              <Snip><em>by M Püschel - </em><a href="#cited">Cited by 2</a><em> - </em><a href="#related">Related articles</a></Snip>
              <Snip>In Latex. □ Style: \usepackage{'{'}<B />{'}'}. □ Horizontal lines: read documentation of <B /><br />http://texcatalogue.sarovar.org/entries/<B />.html.</Snip>
            </Result>
            <Result title="Help with a booktabs table - TeX - LaTeX Stack Exchange" url="https://tex.stackexchange.com/questions/163061/help-with-a-booktabs-table">
              <Snip><em>4 answers</em></Snip>
              <Snip><em>Mar 1, 2014 - </em>A better version: \documentclass{'{article}'} \usepackage{'{'}<B />{'}'} \usepackage[<br />margin=1in]{'{geometry}'} \usepackage{'{array}'} ...</Snip>
              <Answers>
                <tbody>
                  <tr><td><a href="#a1">formatting - How to manually make tables using <B /></a></td><td>6 answers</td><td>11 Jul 2017</td></tr>
                  <tr><td><a href="#a2"><B /> - Table formatting</a></td><td>3 answers</td><td>25 Apr 2013</td></tr>
                  <tr><td><a href="#a3">Columns in tables produced using <B /></a></td><td>1 answer</td><td>9 Nov 2017</td></tr>
                  <tr><td><a href="#a4">Stepped table in <B /></a></td><td>1 answer</td><td>29 May 2018</td></tr>
                </tbody>
              </Answers>
              <Snip><a href="#more-results">More results from tex.stackexchange.com</a></Snip>
            </Result>
            <Result pdf title="booktabs - TeXdoc.net" url="texdoc.net/texmf-dist/doc/latex/booktabs/booktabs.pdf">
              <Snip><em>by S Fear - </em><a href="#cited">Cited by 32</a><em> - </em><a href="#related">Related articles</a></Snip>
              <Snip><em>Apr 27, 2016 - </em>The 2000 release (Version 1.61) of the <B /> package, described herein, adds some<br />enhancements to the 1995 release (Version 1.00),.</Snip>
            </Result>
            <Result seen title="LaTeX/Tables - Wikibooks, open books for an open world" url="https://en.wikibooks.org/wiki/LaTeX/Tables" />
          </Hits>
        </Web>
        <VScroll>
          <Caret c="#999" w={8} h={5} d="M0 6H10L5 0Z" />
          <VThumb />
          <Caret c="#444" w={8} h={5} />
        </VScroll>
      </Viewport>
      <HScroll>
        <Caret c="#999" w={5} h={9} d="M6 0V10L0 5Z" />
        <HThumb />
        <Caret c="#333" w={5} h={9} d="M0 0V10L6 5Z" />
      </HScroll>
    </Chrome>
  );
}

export default function App() {
  return (
    <>
      <Global />
      <Desktop>
        <Monitor>
          <ShellBar>
            <ShellLeft>
              <button><b>Activities</b></button>
              <AppMenu><Evince size={15} />Document Viewer<Caret w={10} h={6} /></AppMenu>
            </ShellLeft>
            <Clock>Wed 12:15</Clock>
            <ShellRight>
              <Tray $after={28}><svg width="19" height="19" viewBox="5 5 30 30"><SlackMark mono="#fff" /></svg></Tray>
              <Tray $after={24}><Thermo />13%</Tray>
              <Tray $after={29}><DropboxGlyph /></Tray>
              <Tray $after={11}><Wifi /></Tray>
              <Tray $after={13}><Volume /></Tray>
              <Tray $after={9}><Battery /></Tray>
              <Caret w={9} h={6} />
            </ShellRight>
          </ShellBar>
          <Workspace>
            <Dock>
              <DockList>
                {dock.map(([name, Icon, n]) => (
                  <DockItem key={name} $active={name === 'Document Viewer'} title={name}>
                    {n > 0 && <Dots>{range(1, n).map(k => <i key={k} />)}</Dots>}
                    <Icon />
                  </DockItem>
                ))}
              </DockList>
              <GridButton aria-label="Show applications">{range(1, 9).map(k => <i key={k} />)}</GridButton>
            </Dock>
            <DocumentViewer />
          </Workspace>
          <ScreenEdge />
        </Monitor>
        <SlackWindow />
        <ChromeWindow />
      </Desktop>
    </>
  );
}
